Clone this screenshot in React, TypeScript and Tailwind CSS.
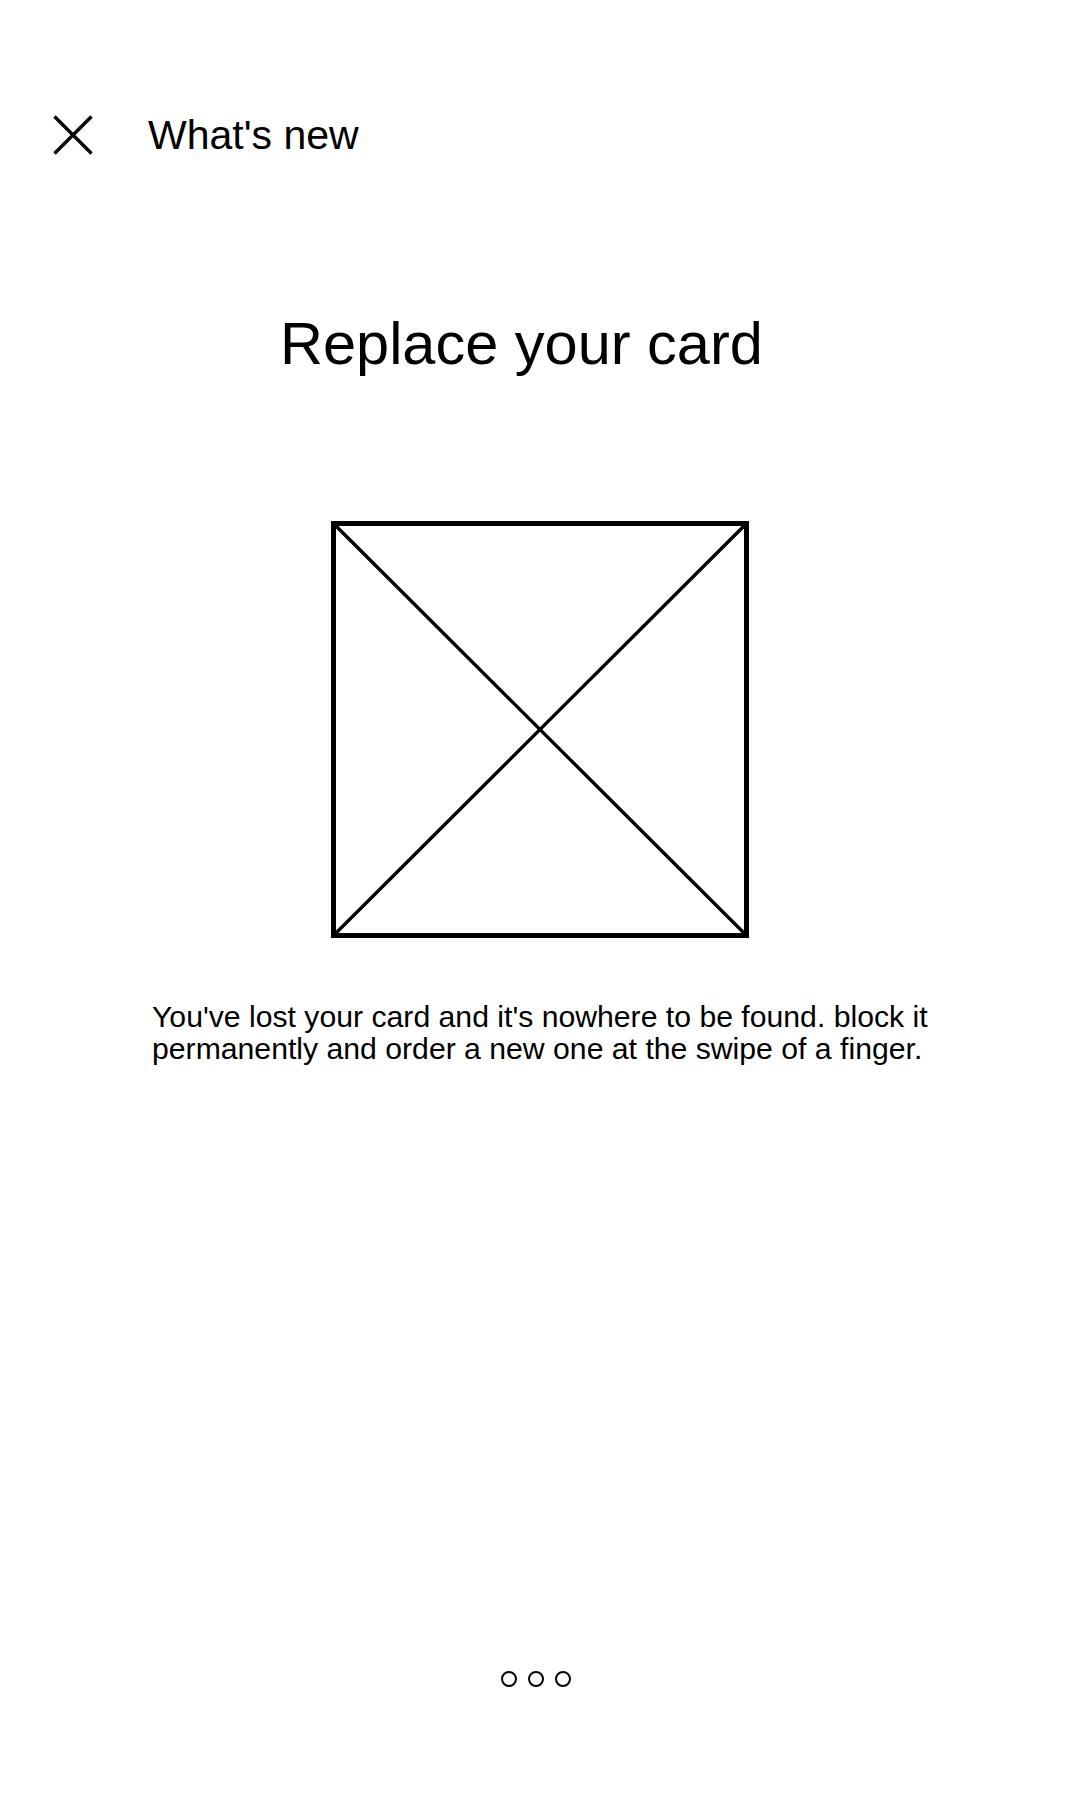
import React from "react";

const CloseIcon = () => (
  <svg width="40" height="40" viewBox="0 0 40 40" className="shrink-0">
    <path d="M1.5 1.5 L38.5 38.5 M38.5 1.5 L1.5 38.5" stroke="#000" strokeWidth="3.4" />
  </svg>
);

const PlaceholderImage = () => (
  <svg width="418" height="417" viewBox="0 0 418 417">
    <rect x="2.5" y="2.5" width="413" height="412" fill="none" stroke="#000" strokeWidth="5" />
    <path d="M3 3 L415 414 M415 3 L3 414" stroke="#000" strokeWidth="3.4" />
  </svg>
);

const App = () => {
  return (
    <div className="w-[1080px] h-[1800px] bg-white text-black flex flex-col font-['Liberation_Sans',Arial,sans-serif]">
      {/* Header */}
      <div className="flex items-center pt-[115px] pl-[53px] gap-[55px] h-[155px]">
        <CloseIcon />
        <span className="text-[41px] leading-none">What's new</span>
      </div>

      {/* Title */}
      <h1 className="mt-[159px] pl-[280px] text-[59.5px] leading-none font-normal">Replace your card</h1>

      {/* Illustration */}
      <div className="mt-[147px] flex justify-center">
        <PlaceholderImage />
      </div>

      {/* Description */}
      <p className="mt-[63px] ml-[152px] w-[800px] text-[30.2px] leading-[32px]">
        You've lost your card and it's nowhere to be found. block it
        <br />
        permanently and order a new one at the swipe of a finger.
      </p>

      {/* Pager */}
      <div className="mt-[606px] flex justify-center gap-[11px]">
        <div className="ml-[-8px] w-4 h-4 rounded-full border-[2.5px] border-black" />
        <div className="w-4 h-4 rounded-full border-[2.5px] border-black" />
        <div className="w-4 h-4 rounded-full border-[2.5px] border-black" />
      </div>
    </div>
  );
};

export default App;
